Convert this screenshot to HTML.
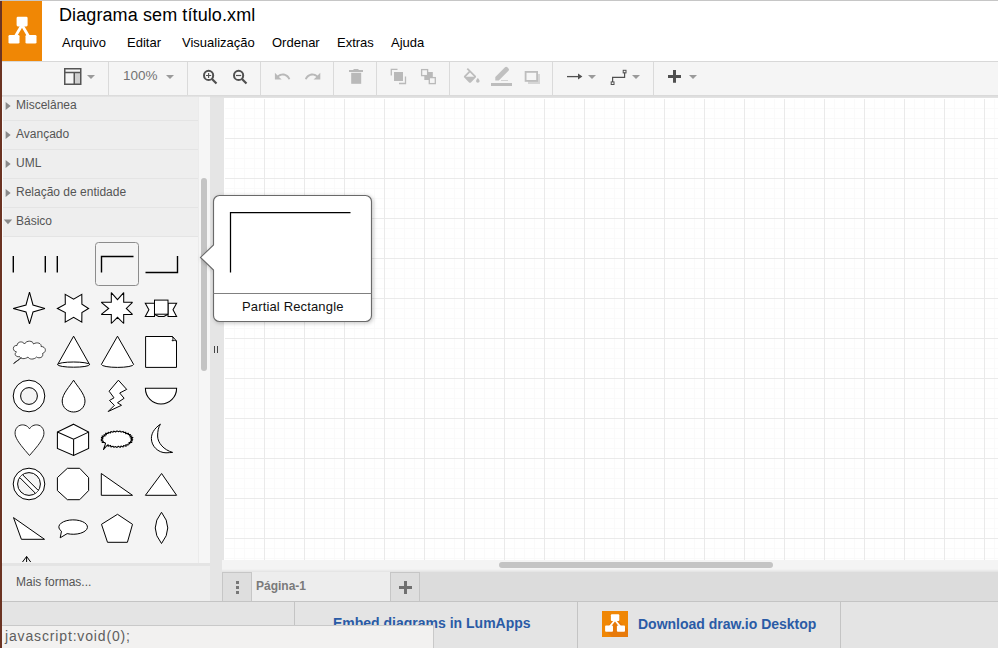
<!DOCTYPE html>
<html><head><meta charset="utf-8">
<style>
*{box-sizing:border-box;margin:0;padding:0}
html,body{width:998px;height:648px;overflow:hidden;background:#fff;font-family:"Liberation Sans",sans-serif;position:relative}
.a{position:absolute}
.t{position:absolute;white-space:nowrap;line-height:1}
</style></head><body>
<!-- top line -->
<div class="a" style="left:0;top:0;width:998px;height:1px;background:#c6c6c6"></div>
<!-- header -->
<div class="a" style="left:2px;top:1px;width:40px;height:60px;background:#f08705"></div>
<svg class="a" style="left:2px;top:1px" width="40" height="60" viewBox="0 0 40 60">
 <path d="M20 24 L13 36 M20 24 L27 36" stroke="#fff" stroke-width="2.8" fill="none"/>
 <rect x="14.6" y="15.8" width="11" height="9.6" rx="1.3" fill="#fff"/>
 <rect x="6.5" y="34" width="11" height="8.5" rx="1.3" fill="#fff"/>
 <rect x="23.5" y="34" width="11" height="8.5" rx="1.3" fill="#fff"/>
</svg>
<div class="t" style="left:59px;top:6px;font-size:18px;letter-spacing:0.1px;color:#000">Diagrama sem título.xml</div>
<div class="t" style="left:62px;top:36px;font-size:13px;color:#000">Arquivo</div>
<div class="t" style="left:127px;top:36px;font-size:13px;color:#000">Editar</div>
<div class="t" style="left:182px;top:36px;font-size:13px;color:#000">Visualização</div>
<div class="t" style="left:272px;top:36px;font-size:13px;color:#000">Ordenar</div>
<div class="t" style="left:337px;top:36px;font-size:13px;color:#000">Extras</div>
<div class="t" style="left:391px;top:36px;font-size:13px;color:#000">Ajuda</div>

<!-- toolbar -->
<div class="a" style="left:2px;top:61px;width:996px;height:35px;background:#f5f5f5;border-top:1px solid #d8d8d8;border-bottom:1px solid #dadada"></div>


<!-- toolbar icons -->
<svg class="a" style="left:0;top:61px" width="998" height="35" viewBox="0 61 998 35">
 <g fill="none" stroke="#dadada" stroke-width="1">
  <path d="M108.5 62V95M187.5 62V95M260.5 62V95M333.5 62V95M376.5 62V95M449.5 62V95M552.5 62V95M653.5 62V95"/>
 </g>
 <!-- layout icon -->
 <rect x="74" y="72" width="6.5" height="12" fill="#cfcfcf"/>
 <rect x="64.75" y="68.75" width="16" height="15.5" fill="none" stroke="#555" stroke-width="1.5"/>
 <path d="M64.75 72.5H80.75M74.25 72.5V84.25" stroke="#555" stroke-width="1.5" fill="none"/>
 <!-- dropdowns -->
 <g fill="#9a9a9a">
  <path d="M87 75H95L91 79Z"/>
  <path d="M166 75H174L170 79Z"/>
  <path d="M588 75H596L592 79Z"/>
  <path d="M632 75H640L636 79Z"/>
  <path d="M689 75H697L693 79Z"/>
 </g>
 <!-- zoom in/out -->
 <g fill="none" stroke="#505050">
  <circle cx="208.6" cy="75.4" r="4.6" stroke-width="2"/>
  <path d="M212 79L216.5 83.5" stroke-width="2.2"/>
  <path d="M206 75.5H211.2M208.6 72.9V78.1" stroke-width="1.1"/>
  <circle cx="238.6" cy="75.4" r="4.6" stroke-width="2"/>
  <path d="M242 79L246.5 83.5" stroke-width="2.2"/>
  <path d="M236 75.5H241.2" stroke-width="1.2"/>
 </g>
 <!-- undo/redo -->
 <g fill="#b9b9b9">
  <path transform="translate(273.4 67.6) scale(0.75)" d="M12.5 8c-2.65 0-5.05.99-6.9 2.6L2 7v9h9l-3.620-3.62c1.39-1.16 3.16-1.88 5.12-1.88 3.54 0 6.55 2.31 7.6 5.5l2.37-.78C21.08 11.03 17.15 8 12.5 8z"/>
  <path transform="translate(303.8 67.6) scale(0.75)" d="M18.4 10.6C16.55 8.99 14.15 8 11.5 8c-4.65 0-8.58 3.03-9.960 7.22L3.9 16c1.05-3.19 4.05-5.5 7.6-5.5 1.95 0 3.73.72 5.12 1.88L13 16h9V7l-3.6 3.6z"/>
 </g>
 <!-- trash -->
 <g fill="#b9b9b9">
  <rect x="349" y="70" width="14" height="2"/>
  <rect x="353.5" y="69" width="5" height="1.5"/>
  <rect x="351.2" y="72.8" width="10" height="11"/>
 </g>
 <!-- to front -->
 <rect x="394" y="72" width="9" height="9" fill="#b9b9b9"/>
 <path d="M391.3 75.5V69.3H397.5M405.5 76.5V83.5H399" fill="none" stroke="#b9b9b9" stroke-width="1.3"/>
 <!-- to back -->
 <rect x="424.3" y="72" width="8.5" height="8" fill="#b9b9b9"/>
 <rect x="421.6" y="69.6" width="6" height="6" fill="#f5f5f5" stroke="#b9b9b9" stroke-width="1.3"/>
 <rect x="429.3" y="77.6" width="6" height="6" fill="#f5f5f5" stroke="#b9b9b9" stroke-width="1.3"/>
 <!-- fill -->
 <path transform="translate(461.3 68) scale(0.87)" fill="#bdbdbd" d="M16.56 8.94L7.62 0 6.21 1.41l2.38 2.38-5.15 5.15c-.59.59-.59 1.54 0 2.12l5.5 5.5c.29.29.68.44 1.06.44s.77-.15 1.06-.44l5.5-5.5c.59-.58.59-1.530 0-2.12zM5.21 10L10 5.21 14.79 10H5.21zM19 11.5s-2 2.17-2 3.5c0 1.1.9 2 2 2s2-.9 2-2c0-1.33-2-3.5-2-3.5z"/>
 <!-- line color -->
 <path d="M495.3 77L505 67.3Q506.2 66.1 507.4 67.3L508.5 68.4Q509.7 69.6 508.5 70.8L498.8 80.5H495.3Z" fill="#c0c0c0"/>
 <rect x="491" y="83" width="21" height="3" fill="#bdbdbd"/>
 <path d="M501 80.5H508" stroke="#cacaca" stroke-width="0.8"/>
 <!-- shadow -->
 <rect x="528" y="74" width="12" height="10" fill="#d5d5d5"/>
 <rect x="525.6" y="71.9" width="11.5" height="9" fill="#f5f5f5" stroke="#bdbdbd" stroke-width="1.8"/>
 <!-- arrow -->
 <path d="M567 76.6H579" stroke="#505050" stroke-width="1.3"/>
 <path d="M578 73.6L582.4 76.6L578 79.6Z" fill="#505050"/>
 <!-- waypoint -->
 <path d="M612.6 82V77.3H624.6V72.5" fill="none" stroke="#505050" stroke-width="1.2"/>
 <rect x="611.2" y="81.9" width="2.8" height="2.6" fill="none" stroke="#505050" stroke-width="1"/>
 <rect x="623.2" y="70.3" width="2.8" height="2.6" fill="none" stroke="#505050" stroke-width="1"/>
 <!-- plus -->
 <path d="M668 76.4H681M674.5 70V82.8" stroke="#505050" stroke-width="3"/>
</svg>
<div class="t" style="left:123px;top:69px;font-size:13.5px;color:#737373">100%</div>

<!-- sidebar -->
<div class="a" id="sidebar" style="left:2px;top:96px;width:208px;height:506px;background:#f4f4f4"></div>


<div class="a" style="left:2px;top:96px;width:196px;height:141px;background:#eeeeee"></div>
<div class="a" style="left:198px;top:96px;width:12px;height:467px;background:#f6f6f6;border-left:1px solid #ebebeb"></div>
<svg class="a" style="left:0;top:96px" width="210" height="470" viewBox="0 96 210 470">
 <g fill="none" stroke="#e4e4e4" stroke-width="1">
  <path d="M2 120.5H198M2 149.5H198M2 178.5H198M2 207.5H198M2 236.5H198"/>
 </g>
 <g fill="#8a8a8a">
  <path d="M5.6 102L10.6 106L5.6 110Z"/>
  <path d="M5.6 131L10.6 135L5.6 139Z"/>
  <path d="M5.6 160L10.6 164L5.6 168Z"/>
  <path d="M5.6 189L10.6 193L5.6 197Z"/>
  <path d="M3.8 219.6H12.2L8 224.2Z"/>
 </g>
 <!-- scrollbar thumb -->
 <rect x="201" y="178" width="6" height="193" rx="3" fill="#c4c4c4"/>
 <!-- palette shapes -->
 <g fill="#fff" stroke="#000" stroke-width="1.0" stroke-linejoin="miter" stroke-miterlimit="2.5">
  <path d="M13.3 256V272.5M45.3 256V272.5M57.3 256V272.5" fill="none" stroke-width="1.4"/>
  <rect x="95.5" y="242.5" width="43" height="43" rx="3" fill="none" stroke="#8c8c8c" stroke-width="1"/>
  <path d="M101.5 272.5V256.5H133.5" fill="none" stroke-width="1.4"/>
  <path d="M145.5 272.5H177.5V256" fill="none" stroke-width="1.4"/>
  <!-- row2 -->
  <path d="M29.5 292.2L33 305L44.9 308.5L33 312L29.5 323.9L26 312L13.2 308.5L26 305Z" stroke-width="1.05"/>
  <path d="M57.4 308.5L65.3 304.3L65.2 294.4L73.6 299.2L81.8 294.4L81.9 304.3L88.6 308.5L81.9 312.6L81.8 322.2L73.6 317.3L65.2 322.2L65.3 312.6Z" stroke-width="1.05"/>
  <path d="M111.3 292.6L117.5 299.7L123.7 292.6L123.7 302.3L132.5 302.3L126.3 308.5L132.5 314.4L123.7 314.4L123.7 323.5L117.5 317.3L111.3 323.5L111.3 314.4L101.3 314.4L108.7 308.5L101.3 302.3L111.3 302.3Z" stroke-width="1.05"/>
  <path d="M145.3 303.2H154.5V316.4H145.3L148.9 309.8Z M176.6 303.2H168V316.4H176.6L173 309.8Z" stroke-width="1.05"/>
  <rect x="154.5" y="300.1" width="13.5" height="14.1" stroke-width="1.0"/>
  <path d="M154.5 314.2L158.5 316.4H164L168 314.2" fill="none" stroke-width="1.05"/>
  <!-- row3 -->
  <path d="M16.5 352C12 351 12.5 345 17 345.5C17.5 341 23 341 24.5 344C26.5 340 33 340.5 33.5 344C37 341.5 42 343.5 41 346.5C46 346.5 47 352 42.5 353.5C44 357 39.5 359 36.5 357C34 360 29 359.5 28 357C25 359.5 20 359 19.5 356.5C16 357.5 13.5 354 16.5 352Z" stroke-width="0.9" stroke="#333"/>
  <path d="M21.5 357.5L13.6 363.5L19.5 359.2" fill="none" stroke-width="1" stroke="#333"/>
  <path d="M73.6 336.2L57.6 364.6A16 2.6 0 0 0 89.6 364.6Z" stroke-width="1.0"/>
  <path d="M57.6 364.6A16 2.6 0 0 1 89.6 364.6" fill="none" stroke-width="1"/>
  <path d="M117.5 336.2L101.4 364.4A16.1 3 0 0 0 133.6 364.4Z" stroke-width="1.0"/>
  <path d="M145.6 336.5H172.5L176.5 341V367.4H145.6Z" stroke-width="1.0"/>
  <path d="M172.5 336.5Q174 339.5 172 340.8Q175 340 176.5 341" fill="none" stroke-width="0.9"/>
  <!-- row4 -->
  <circle cx="29" cy="396" r="15.8" stroke-width="1.0"/>
  <circle cx="29" cy="396" r="8.4" fill="#f4f4f4" stroke-width="1.0"/>
  <path d="M73.6 380.2C70 386 62.2 394 62.2 401C62.2 407.5 67.5 412 73.6 412C79.7 412 85 407.5 85 401C85 394 77 386 73.6 380.2Z" stroke-width="1.0"/>
  <path d="M118.4 380.2L126.7 389.4L119.7 393L124.1 398.3L117.5 402.7L121.5 405.3L108.2 411.5L114.4 405.3L109.5 400.5L114 397.8L109.1 391.2Z" stroke-width="1"/>
  <path d="M145.4 388.2H176.6A15.6 15.8 0 0 1 145.4 388.2Z" stroke-width="1.05"/>
  <!-- row5 -->
  <path d="M29.5 428.8C27.2 425 23 424.3 20 425.3C15.5 427 14.3 432 15.5 436C17.5 442 24 449 29.5 455.5C35 449 41.5 442 43.5 436C44.7 432 43.5 427 39 425.3C36 424.3 31.8 425 29.5 428.8Z" stroke-width="1.0" stroke="#222"/>
  <path d="M73.6 424.2L88.6 432.1V448.4L73.6 455.5L57.4 448.4V432.1Z" stroke-width="1.05"/>
  <path d="M57.4 432.1L73.6 439.2L88.6 432.1M73.6 439.2V455.5" fill="none" stroke-width="1.05"/>
  <path d="M132.7 439.2 L130.8 439.9 L132.5 440.8 L130.4 441.3 L131.8 442.4 L128.9 442.5 L129.9 443.7 L128.0 443.9 L128.1 445.0 L125.7 444.7 L126.1 446.3 L123.5 445.6 L123.2 447.0 L121.0 446.1 L120.1 447.4 L118.3 446.2 L117.0 447.5 L115.6 446.6 L113.9 447.3 L112.9 446.2 L110.9 446.9 L110.6 445.4 L108.0 446.2 L108.2 444.8 L107 445.5 L103.5 449.5 L105.5 443.6 L104.8 442.6 L102.1 442.4 L103.4 441.3 L101.2 440.8 L102.8 439.9 L101.2 439.2 L102.9 438.5 L101.4 437.6 L103.4 437.0 L102.0 436.0 L105.1 435.9 L104.0 434.7 L106.5 434.7 L105.5 433.2 L108.2 433.6 L108.1 432.3 L110.5 432.9 L110.9 431.5 L113.0 432.3 L113.9 431.1 L115.6 432.0 L117.0 430.9 L118.4 431.8 L120.1 431.0 L121.1 432.1 L123.2 431.4 L123.7 432.6 L125.9 432.2 L125.6 433.7 L128.5 433.2 L128.0 434.5 L130.5 434.5 L129.3 435.8 L131.9 436.0 L130.0 437.1 L132.9 437.6 L130.9 438.5Z" stroke-width="1.05" stroke-linejoin="round"/>
  <path d="M160.4 424.2C153.5 429 151.4 434 151.4 438.5C151.4 446 158 452.8 166 452.8C168.5 452.8 170.5 452.5 172.6 452.4C164 450 157.6 443 157.6 436C157.6 431 158.5 427 160.4 424.2Z" stroke-width="1.0"/>
  <!-- row6 -->
  <circle cx="29" cy="484" r="15.8" stroke-width="1.0"/>
  <circle cx="29" cy="484" r="11.4" fill="#f4f4f4" stroke-width="1.0"/>
  <path d="M22.48 474.66L38.34 490.52L35.52 493.34L19.66 477.48Z" fill="#fff" stroke="none"/><path d="M22.48 474.66L38.34 490.52M35.52 493.34L19.66 477.48" fill="none" stroke-width="1.0"/>
  <path d="M67.4 468.3H79.7L88.6 477.6V490.6L79.7 499.7H67.4L57.4 490.6V477.6Z" stroke-width="1.0"/>
  <path d="M101.3 473.5V495.3H132.5Z" stroke-width="1.0"/>
  <path d="M161.6 473.5L145.4 495.3H176.6Z" stroke-width="1.0"/>
  <!-- row7 -->
  <path d="M13.5 517.6L21.4 539.3H44.5Z" stroke-width="1.0"/>
  <path d="M61.49 531.23A14.3 7.2 0 1 1 67.16 533.6L60.2 537.8Z" stroke-width="1.0"/>
  <path d="M117.5 514.3L132.5 524.3L127.4 542.3H107.5L101.5 524.3Z" stroke-width="1.0"/>
  <path d="M161.5 512.3Q174 528 161.5 543.5Q149 528 161.5 512.3Z" stroke-width="1.0"/>
  <path d="M22.5 562L26.6 556.5L30.7 562M26.6 556.5V562" fill="none" stroke-width="1.0"/>
 </g>
</svg>
<div class="t" style="left:16px;top:99px;font-size:12px;color:#555">Miscelânea</div>
<div class="t" style="left:16px;top:128px;font-size:12px;color:#555">Avançado</div>
<div class="t" style="left:16px;top:157px;font-size:12px;color:#555">UML</div>
<div class="t" style="left:16px;top:186px;font-size:12px;color:#555">Relação de entidade</div>
<div class="t" style="left:16px;top:215px;font-size:12px;color:#555">Básico</div>
<!-- mais formas -->
<div class="a" style="left:2px;top:563px;width:208px;height:3px;background:#e4e4e4"></div>
<div class="a" style="left:2px;top:566px;width:208px;height:35px;background:#eeeeee"></div>
<div class="t" style="left:16px;top:576px;font-size:12px;color:#555">Mais formas...</div>

<!-- splitter -->
<div class="a" style="left:210px;top:96px;width:14px;height:506px;background:#e5e5e5"></div>

<!-- canvas -->
<div class="a" style="left:214px;top:346px;width:1px;height:7px;background:#444"></div>
<div class="a" style="left:217px;top:346px;width:1px;height:7px;background:#444"></div>
<div class="a" style="left:224px;top:98px;width:774px;height:462px;background:#fff"></div>
<div class="a" id="canvas" style="left:225px;top:99px;width:773px;height:461px;background-color:#fff;
background-image:linear-gradient(to right,#eaeaea 1px,transparent 1px),linear-gradient(to bottom,#eaeaea 1px,transparent 1px),linear-gradient(to right,#fafafa 1px,transparent 1px),linear-gradient(to bottom,#fafafa 1px,transparent 1px);
background-size:40px 40px,40px 40px,10px 10px,10px 10px;background-position:-1px -1px"></div>

<!-- h scrollbar track -->
<div class="a" style="left:222px;top:560px;width:776px;height:12px;background:linear-gradient(to bottom,#f4f4f4 0,#f4f4f4 9px,#e2e2e2 12px)"></div>
<div class="a" style="left:499px;top:562px;width:274px;height:6px;border-radius:3px;background:#c4c4c4"></div>
<!-- tab bar -->
<div class="a" style="left:222px;top:572px;width:776px;height:29px;background:#dcdcdc"></div>
<div class="a" style="left:222px;top:572px;width:30px;height:29px;background:#dedede;border:1px solid #c6c6c6;border-bottom:none"></div>
<div class="a" style="left:236px;top:581px;width:3px;height:3px;background:#777"></div>
<div class="a" style="left:236px;top:586px;width:3px;height:3px;background:#777"></div>
<div class="a" style="left:236px;top:591px;width:3px;height:3px;background:#777"></div>
<div class="a" style="left:252px;top:572px;width:138px;height:29px;background:#ededed"></div>
<div class="t" style="left:256px;top:580px;font-size:12px;font-weight:bold;color:#7a7a7a">Página-1</div>
<div class="a" style="left:390px;top:572px;width:30px;height:29px;background:#dedede;border:1px solid #c6c6c6;border-bottom:none"></div>
<div class="a" style="left:399px;top:586px;width:13px;height:3px;background:#707070"></div>
<div class="a" style="left:404px;top:581px;width:3px;height:13px;background:#707070"></div>
<!-- tooltip -->
<svg class="a" style="left:190px;top:184px" width="196" height="150" viewBox="190 184 196 150">
 <defs><filter id="sh" x="-20%" y="-20%" width="140%" height="140%"><feGaussianBlur in="SourceAlpha" stdDeviation="2"/><feOffset dx="0.5" dy="1"/><feComponentTransfer><feFuncA type="linear" slope="0.25"/></feComponentTransfer><feMerge><feMergeNode/><feMergeNode in="SourceGraphic"/></feMerge></filter></defs>
 <path filter="url(#sh)" d="M219.5 195.5H365.5A6 6 0 0 1 371.5 201.5V315.5A6 6 0 0 1 365.5 321.5H219.5A6 6 0 0 1 213.5 315.5V270L200.5 257.4L213.5 245V201.5A6 6 0 0 1 219.5 195.5Z" fill="#fff" stroke="#6a6a6a" stroke-width="1.15"/>
 <path d="M213.5 293.5H371.5" stroke="#808080" stroke-width="1.2"/>
 <path d="M230.5 272.5V212.5H350.5" fill="none" stroke="#000" stroke-width="1.25"/>
</svg>
<div class="t" style="left:242px;top:300px;font-size:13px;letter-spacing:0.15px;color:#111">Partial Rectangle</div>

<!-- footer -->
<div class="a" style="left:2px;top:601px;width:996px;height:47px;background:#e4e4e4;border-top:1px solid #c4c4c4"></div>
<div class="a" style="left:294px;top:602px;width:1px;height:46px;background:#c4c4c4"></div>
<div class="a" style="left:577px;top:602px;width:1px;height:46px;background:#c4c4c4"></div>
<div class="a" style="left:840px;top:602px;width:1px;height:46px;background:#c4c4c4"></div>
<div class="t" style="left:333px;top:616px;font-size:14px;font-weight:bold;color:#2a5ba6">Embed diagrams in LumApps</div>
<svg class="a" style="left:602px;top:611px" width="26" height="26" viewBox="0 0 26 26">
 <rect width="26" height="26" fill="#f08705"/>
 <path d="M13 6L26 19V26H10L3 19Z" fill="#e07010" opacity="0.55"/>
 <path d="M13 9L7.5 16M13 9L18.5 16" stroke="#fff" stroke-width="1.9" fill="none"/>
 <rect x="8.9" y="3.3" width="8.4" height="6.6" rx="0.9" fill="#fff"/>
 <rect x="3.1" y="14.6" width="7.9" height="6.1" rx="0.9" fill="#fff"/>
 <rect x="14.9" y="14.6" width="8.1" height="6.1" rx="0.9" fill="#fff"/>
</svg>
<div class="t" style="left:638px;top:617px;font-size:14px;font-weight:bold;color:#2a5ba6">Download draw.io Desktop</div>
<!-- status bar -->
<div class="a" style="left:0;top:625px;width:434px;height:23px;background:#f2f1f0;border-top:1px solid #c9c9c9;border-right:1px solid #c9c9c9"></div>
<div class="t" style="left:5px;top:629px;font-size:14px;letter-spacing:0.85px;color:#5e5e5e">javascript:void(0);</div>

<div class="a" style="left:210px;top:95px;width:788px;height:3px;background:linear-gradient(to bottom,#d8d8d8,#e4e4e4)"></div>
<div class="a" style="left:2px;top:95px;width:208px;height:2px;background:linear-gradient(to bottom,#d9d9d9,#e6e6e6)"></div>
<div class="a" style="left:2px;top:97px;width:1px;height:466px;background:#fbfbfb"></div>
<!-- left strip -->
<div class="a" style="left:0;top:1px;width:2px;height:647px;background:#6b3322"></div>
</body></html>
